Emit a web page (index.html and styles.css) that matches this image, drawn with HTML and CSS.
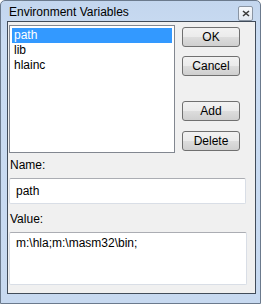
FILE: index.html
```html
<!DOCTYPE html>
<html lang="en">
<head>
  <meta charset="UTF-8">
  <title>Environment Variables</title>
  <link rel="stylesheet" href="styles.css">
</head>
<body>

  <div class="window">
    <!-- title bar -->
    <div class="titlebar">
      <span class="title">Environment Variables</span>
      <span class="close">
        <svg width="8" height="7" viewBox="0 0 8 7">
          <path d="M1 1 L7 6 M7 1 L1 6" stroke="#3a3a3a" stroke-width="1.6" fill="none"/>
        </svg>
      </span>
    </div>

    <div class="client">
      <div class="top">
        <ul class="listbox">
          <li class="selected">path</li>
          <li>lib</li>
          <li>hlainc</li>
        </ul>
        <div class="buttons">
          <button class="ok">OK</button>
          <button class="cancel">Cancel</button>
          <button class="add">Add</button>
          <button class="delete">Delete</button>
        </div>
      </div>

      <label class="lbl name-lbl">Name:</label>
      <div class="field name-field">path</div>

      <label class="lbl value-lbl">Value:</label>
      <div class="field value-field">m:\hla;m:\masm32\bin;</div>
    </div>
  </div>

</body>
</html>
```

FILE: styles.css
```css
body {
  margin: 0;
  padding: 0;
  font-family: 'Liberation Sans', Arial, sans-serif;
  font-size: 12px;
  color: #000;
  background: #fff;
}

.window {
  width: 261px;
  height: 304px;
  box-sizing: border-box;
  border: 1px solid #6b7a8d;
  border-radius: 5px 5px 0 0;
  background: linear-gradient(#c3d6ee, #cadcf2 40px, #c7d9f0);
  padding: 0 4px 7px 6px;
}

.titlebar {
  height: 20px;
  display: flex;
  align-items: center;
  justify-content: space-between;
}

.title {
  padding-left: 2px;
  padding-top: 2px;
  font-size: 12px;
}

.close {
  width: 13px;
  height: 13px;
  margin-top: 5px;
  margin-right: 3px;
  border: 1px solid #8a95a3;
  border-radius: 2px;
  background: linear-gradient(#f7f9fc, #e3e9f1);
  display: flex;
  align-items: center;
  justify-content: center;
}

.client {
  height: 273px;
  box-sizing: border-box;
  border: 1px solid #414c5a;
  background: #f0f0f0;
  padding: 3px 0 0 1px;
}

.top {
  display: flex;
  gap: 7px;
}

.listbox {
  list-style: none;
  margin: 0;
  width: 166px;
  height: 128px;
  box-sizing: border-box;
  border: 1px solid #828790;
  outline: 1px solid #fff;
  outline-offset: -2px;
  background: #fff;
  padding: 2px 2px 0 2px;
}

.listbox li {
  height: 15px;
  line-height: 15px;
  padding-left: 2px;
}

.listbox li.selected {
  background: #3399ff;
  color: #fff;
}

.buttons {
  display: flex;
  flex-direction: column;
  padding-top: 2px;
}

.buttons button {
  width: 58px;
  height: 20px;
  box-sizing: border-box;
  border: 1px solid #707070;
  border-radius: 3px;
  background: linear-gradient(#f2f2f2, #ebebeb 50%, #dddddd 51%, #cfcfcf);
  font-family: 'Liberation Sans', Arial, sans-serif;
  font-size: 12px;
  color: #000;
  padding: 0;
}

.buttons .cancel {
  margin-top: 9px;
}

.buttons .add {
  margin-top: 25px;
}

.buttons .delete {
  margin-top: 10px;
}

.lbl {
  display: block;
  padding-left: 1px;
}

.name-lbl {
  margin-top: 5px;
  height: 20px;
}

.field {
  background: #fff;
  border: 1px solid #d9dee6;
  border-top-color: #abadb3;
  border-radius: 2px;
  box-sizing: border-box;
  padding-left: 6px;
}

.name-field {
  width: 237px;
  height: 26px;
  line-height: 24px;
}

.value-lbl {
  margin-top: 8px;
  height: 20px;
}

.value-field {
  width: 238px;
  height: 53px;
  padding-top: 3px;
}
```
